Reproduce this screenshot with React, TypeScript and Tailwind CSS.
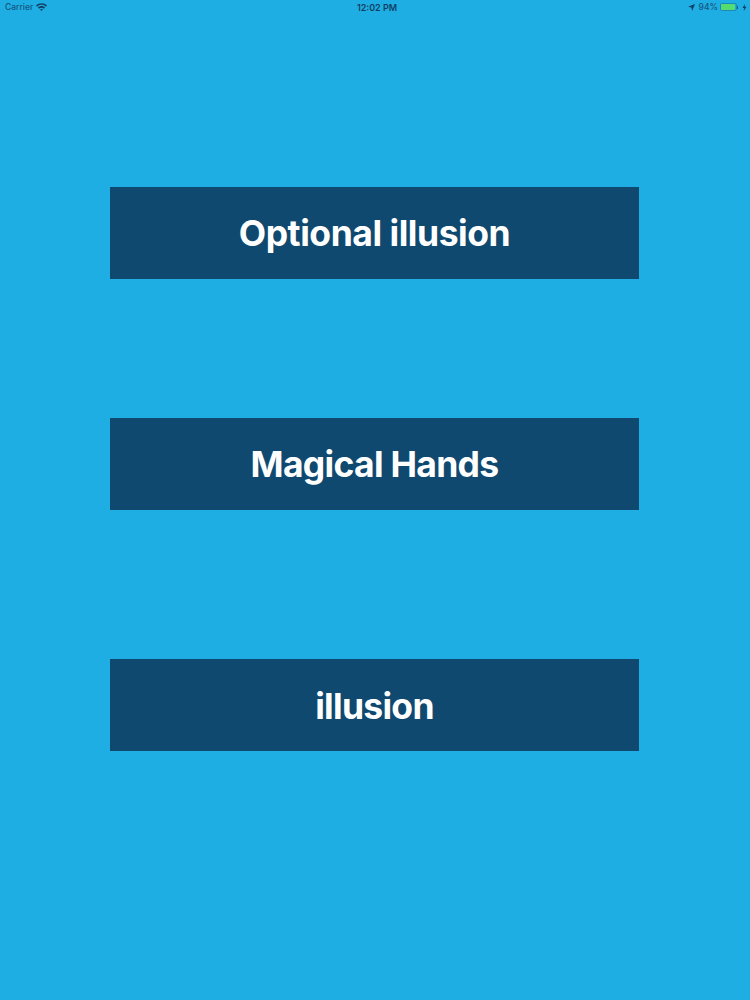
const font = "font-['Inter','Liberation_Sans',sans-serif]";

function WifiIcon() {
  return (
    <svg width="11" height="8" viewBox="0 0 11 8" fill="#123f63">
      <path d="M0 2.6C3 -.6 8 -.6 11 2.6L9.9 3.8C7.4 1.2 3.6 1.2 1.1 3.8Z" />
      <path d="M2 4.6C3.9 2.6 7.1 2.6 9 4.6L7.9 5.7C6.6 4.4 4.4 4.4 3.1 5.7Z" />
      <path d="M4 6.6C4.8 5.8 6.2 5.8 7 6.6L5.5 8Z" />
    </svg>
  );
}

function StatusBar() {
  return (
    <div className="grid h-[14px] grid-cols-3 items-center pl-[5px] pr-[3px] text-[8px] font-medium leading-none text-[#17557f]">
      <div className="flex items-center gap-[3px]">
        <span className="text-[8.5px]">Carrier</span>
        <WifiIcon />
      </div>
      <div className="pl-[2px] text-center text-[9px] font-semibold text-[#123f63]">12:02 PM</div>
      <div className="flex items-center justify-end">
        <svg width="7" height="7" viewBox="0 0 7 7" fill="#123f63" className="mr-[4px]">
          <path d="M7 0L4.2 7L3.4 3.6L0 2.8Z" />
        </svg>
        <span className="mr-[2px] text-[8.5px]">94%</span>
        <div className="h-[8px] w-[17px] rounded-[2px] border border-[#17557f]/40">
          <div className="h-full w-[92%] rounded-[1px] bg-[#55dc6e]" />
        </div>
        <div className="mr-[4px] h-[3px] w-px bg-[#123f63]/70" />
        <svg width="5" height="7" viewBox="0 0 4 7" fill="#123f63">
          <path d="M2.4 0L0 4H1.6L1.2 7L4 2.8H2.2Z" />
        </svg>
      </div>
    </div>
  );
}

function MenuButton({ label, className }: { label: string; className: string }) {
  return (
    <button className={`flex h-[92px] w-[529px] items-center justify-center bg-[#10496f] text-[35.5px] font-bold text-white ${className}`}>
      {label}
    </button>
  );
}

export default function App() {
  return (
    <div className={`h-[1000px] w-[750px] overflow-hidden bg-[#1eaee3] ${font}`}>
      <StatusBar />
      <div className="flex flex-col pl-[110px]">
        <MenuButton label="Optional illusion" className="mt-[173px] pt-[2px] tracking-[-0.013em]" />
        <MenuButton label="Magical Hands" className="mt-[139px] pt-[2px] tracking-[-0.02em]" />
        <MenuButton label="illusion" className="mt-[149px] pt-[4px] tracking-[-0.02em]" />
      </div>
    </div>
  );
}
